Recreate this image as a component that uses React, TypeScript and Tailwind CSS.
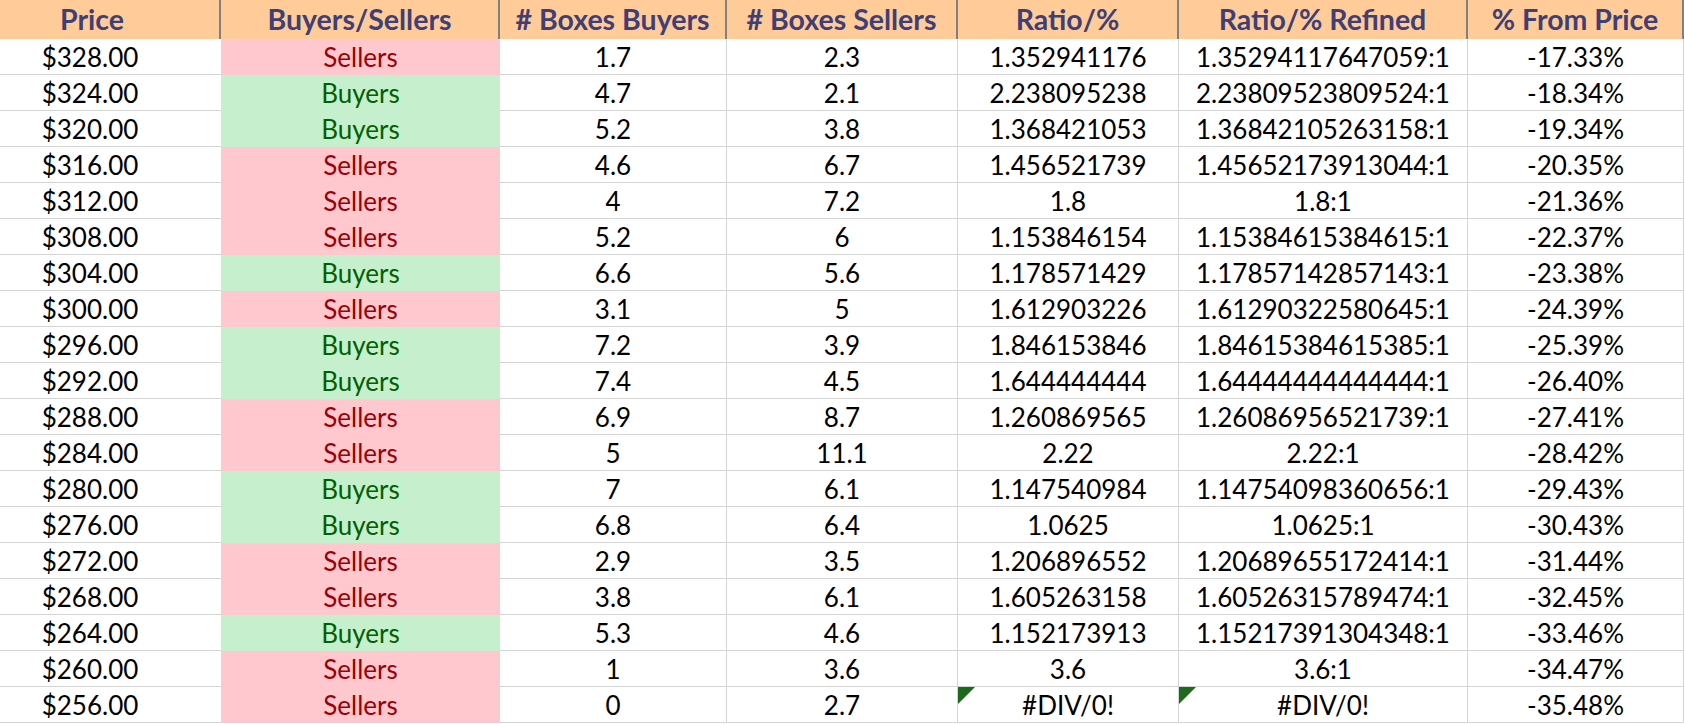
import React from "react";

type Row = {
  price: string;
  side: "Buyers" | "Sellers";
  buyers: string;
  sellers: string;
  ratio: string;
  refined: string;
  fromPrice: string;
};

const rows: Row[] = [
  { price: "$328.00", side: "Sellers", buyers: "1.7", sellers: "2.3", ratio: "1.352941176", refined: "1.35294117647059:1", fromPrice: "-17.33%" },
  { price: "$324.00", side: "Buyers", buyers: "4.7", sellers: "2.1", ratio: "2.238095238", refined: "2.23809523809524:1", fromPrice: "-18.34%" },
  { price: "$320.00", side: "Buyers", buyers: "5.2", sellers: "3.8", ratio: "1.368421053", refined: "1.36842105263158:1", fromPrice: "-19.34%" },
  { price: "$316.00", side: "Sellers", buyers: "4.6", sellers: "6.7", ratio: "1.456521739", refined: "1.45652173913044:1", fromPrice: "-20.35%" },
  { price: "$312.00", side: "Sellers", buyers: "4", sellers: "7.2", ratio: "1.8", refined: "1.8:1", fromPrice: "-21.36%" },
  { price: "$308.00", side: "Sellers", buyers: "5.2", sellers: "6", ratio: "1.153846154", refined: "1.15384615384615:1", fromPrice: "-22.37%" },
  { price: "$304.00", side: "Buyers", buyers: "6.6", sellers: "5.6", ratio: "1.178571429", refined: "1.17857142857143:1", fromPrice: "-23.38%" },
  { price: "$300.00", side: "Sellers", buyers: "3.1", sellers: "5", ratio: "1.612903226", refined: "1.61290322580645:1", fromPrice: "-24.39%" },
  { price: "$296.00", side: "Buyers", buyers: "7.2", sellers: "3.9", ratio: "1.846153846", refined: "1.84615384615385:1", fromPrice: "-25.39%" },
  { price: "$292.00", side: "Buyers", buyers: "7.4", sellers: "4.5", ratio: "1.644444444", refined: "1.64444444444444:1", fromPrice: "-26.40%" },
  { price: "$288.00", side: "Sellers", buyers: "6.9", sellers: "8.7", ratio: "1.260869565", refined: "1.26086956521739:1", fromPrice: "-27.41%" },
  { price: "$284.00", side: "Sellers", buyers: "5", sellers: "11.1", ratio: "2.22", refined: "2.22:1", fromPrice: "-28.42%" },
  { price: "$280.00", side: "Buyers", buyers: "7", sellers: "6.1", ratio: "1.147540984", refined: "1.14754098360656:1", fromPrice: "-29.43%" },
  { price: "$276.00", side: "Buyers", buyers: "6.8", sellers: "6.4", ratio: "1.0625", refined: "1.0625:1", fromPrice: "-30.43%" },
  { price: "$272.00", side: "Sellers", buyers: "2.9", sellers: "3.5", ratio: "1.206896552", refined: "1.20689655172414:1", fromPrice: "-31.44%" },
  { price: "$268.00", side: "Sellers", buyers: "3.8", sellers: "6.1", ratio: "1.605263158", refined: "1.60526315789474:1", fromPrice: "-32.45%" },
  { price: "$264.00", side: "Buyers", buyers: "5.3", sellers: "4.6", ratio: "1.152173913", refined: "1.15217391304348:1", fromPrice: "-33.46%" },
  { price: "$260.00", side: "Sellers", buyers: "1", sellers: "3.6", ratio: "3.6", refined: "3.6:1", fromPrice: "-34.47%" },
  { price: "$256.00", side: "Sellers", buyers: "0", sellers: "2.7", ratio: "#DIV/0!", refined: "#DIV/0!", fromPrice: "-35.48%" },
];

const headers = ["Price", "Buyers/Sellers", "# Boxes Buyers", "# Boxes Sellers", "Ratio/%", "Ratio/% Refined", "% From Price"];

const cols = "grid grid-cols-[221px_279px_227px_231px_221px_289px_216px]";

// little green corner Excel puts on cells with an error
function ErrorFlag() {
  return (
    <svg className="absolute left-0 top-0" width="17" height="17" viewBox="0 0 17 17">
      <polygon points="0,0 17,0 0,17" fill="#1d6a1d" />
    </svg>
  );
}

function DataCell({ children, error }: { children: React.ReactNode; error?: boolean }) {
  return (
    <div className="relative flex items-center justify-center border-r border-b border-[#d4d4d4]">
      {error && <ErrorFlag />}
      {children}
    </div>
  );
}

export default function App() {
  return (
    <div
      className="w-[1684px] h-[724px] overflow-hidden bg-white text-black text-[26px] leading-none"
      style={{ fontFamily: "Lato, 'Open Sans', sans-serif" }}
    >
      <div className={`${cols} h-[39px] bg-[#ffcc99]`}>
        {headers.map((h, i) => (
          <div
            key={h}
            className={`flex items-center justify-center border-r-2 border-[#808080] font-bold text-[28.5px] text-[#3f3f76] ${i === 0 ? "pr-[35px]" : ""}`}
          >
            {h}
          </div>
        ))}
      </div>
      {rows.map((r) => {
        const isBuy = r.side === "Buyers";
        const err = r.ratio === "#DIV/0!";
        return (
          <div key={r.price} className={`${cols} h-[36px]`}>
            <div className="flex items-center justify-center pr-[41px] border-b border-[#d4d4d4]">{r.price}</div>
            <div
              className={`flex items-center justify-center ${isBuy ? "bg-[#c6efce] text-[#006100]" : "bg-[#ffc7ce] text-[#9c0006]"}`}
            >
              {r.side}
            </div>
            <DataCell>{r.buyers}</DataCell>
            <DataCell>{r.sellers}</DataCell>
            <DataCell error={err}>{r.ratio}</DataCell>
            <DataCell error={err}>{r.refined}</DataCell>
            <DataCell>{r.fromPrice}</DataCell>
          </div>
        );
      })}
    </div>
  );
}
